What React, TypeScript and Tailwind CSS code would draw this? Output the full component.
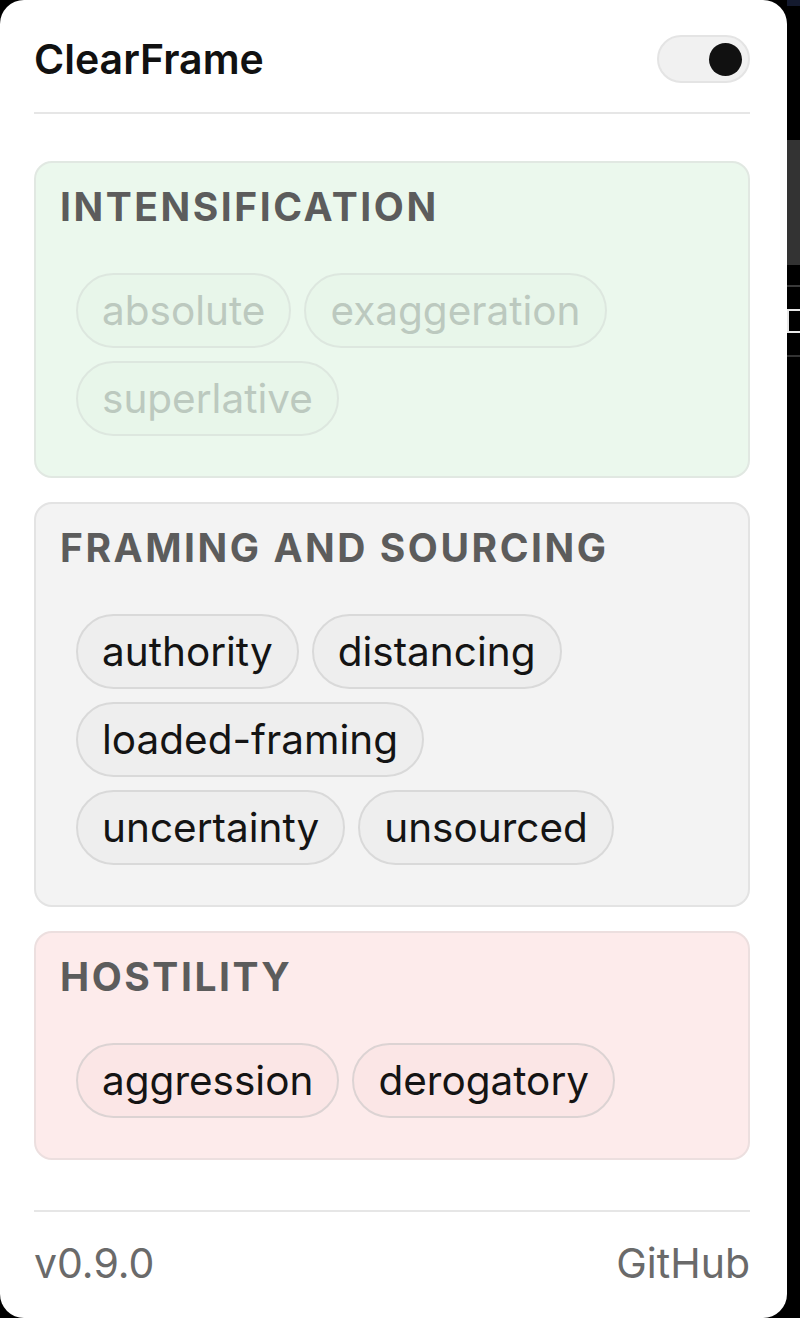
const SECTIONS = [
  {
    title: "INTENSIFICATION",
    enabled: false,
    box: "bg-[#ebf8ed] border-[#e1e8e2]",
    pill: "bg-[#e8f6ea] border-[#dde7df] text-[#bcc9bf]",
    tags: ["absolute", "exaggeration", "superlative"],
  },
  {
    title: "FRAMING AND SOURCING",
    enabled: true,
    box: "bg-[#f3f3f3] border-[#e3e3e3]",
    pill: "bg-[#eeeeee] border-[#d9d9d9] text-[#141414]",
    tags: ["authority", "distancing", "loaded-framing", "uncertainty", "unsourced"],
  },
  {
    title: "HOSTILITY",
    enabled: true,
    box: "bg-[#fdebeb] border-[#ecdfdf]",
    pill: "bg-[#fbe6e6] border-[#dcd3d3] text-[#141414]",
    tags: ["aggression", "derogatory"],
  },
];

function Toggle() {
  return (
    <button
      type="button"
      className="flex items-center justify-end w-[93px] h-[48px] rounded-full bg-[#f1f1f1] border-2 border-[#e4e4e4] pr-[6px]"
    >
      <span className="block w-[33px] h-[33px] rounded-full bg-[#111111]" />
    </button>
  );
}

export default function App() {
  return (
    <div className="flex bg-black min-h-[1318px] font-['Inter','Noto_Sans',sans-serif]">
      <div className="w-[787px] shrink-0 bg-white rounded-[24px] pl-[34px] pr-[37px] flex flex-col">
        <header className="flex items-center justify-between pt-[35px] pb-[29px] border-b-2 border-[#e6e6e6]">
          <h1 className="text-[41px] leading-none font-semibold text-[#111111]">
            ClearFrame
          </h1>
          <Toggle />
        </header>

        <div className="mt-[47px] flex flex-col gap-[24px]">
          {SECTIONS.map((section) => (
            <section
              key={section.title}
              className={`border-2 rounded-[18px] p-6 ${section.box}`}
            >
              <h2 className="text-[39px] leading-none font-bold tracking-[0.065em] text-[#5c5c5c]">
                {section.title}
              </h2>
              <div className="mt-[47px] pl-4 pr-[40px] pb-4 flex flex-wrap gap-[13px]">
                {section.tags.map((tag) => (
                  <span
                    key={tag}
                    className={`border-2 rounded-full px-6 py-[6px] text-[40.5px] leading-[59px] ${section.pill}`}
                  >
                    {tag}
                  </span>
                ))}
              </div>
            </section>
          ))}
        </div>

        <footer className="mt-[50px] border-t-2 border-[#e6e6e6] pt-[31px] flex justify-between text-[41px] leading-none text-[#6a6a6a]">
          <span>v0.9.0</span>
          <a className="text-[#6a6a6a]">GitHub</a>
        </footer>
      </div>

      <div className="flex-1 flex flex-col">
        <div className="h-[6px] bg-[#141a2e]" />
        <div className="mt-[134px] h-[125px] bg-[#333333]" />
        <div className="mt-[20px] h-[2px] bg-[#3a3a3a]" />
        <div className="mt-[22px] h-[24px] border-2 border-r-0 border-[#e8e8e8]" />
        <div className="mt-[22px] h-[2px] bg-[#333333]" />
      </div>
    </div>
  );
}
